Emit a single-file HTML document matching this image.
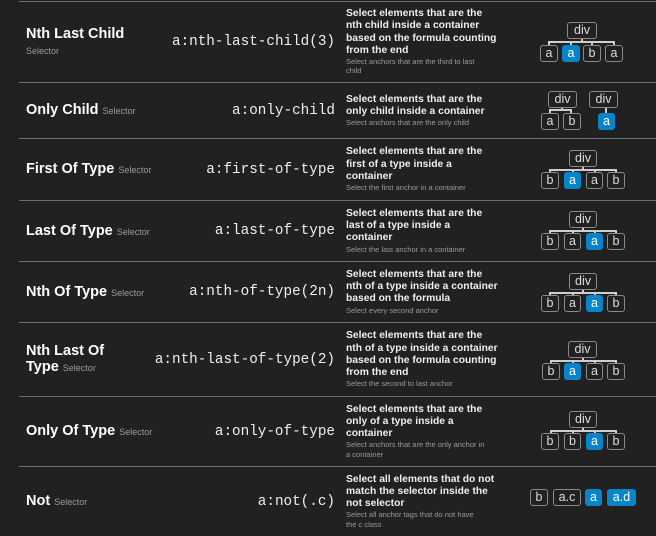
<!DOCTYPE html>
<html><head><meta charset="utf-8"><style>
*{margin:0;padding:0;box-sizing:border-box}
body{width:656px;height:536px;background:#212121;position:relative;overflow:hidden;font-family:"Liberation Sans",sans-serif;color:#fff}
.sep{position:absolute;left:19px;right:0;height:1px;background:#6e6e6e}
.row{position:absolute;left:0;width:656px}
.t{position:absolute;left:26px;top:0;bottom:0;display:flex;align-items:center;font-weight:bold;font-size:14.5px;line-height:16px;width:145px}
.t small{font-size:9px;color:#9a9a9a;font-weight:normal}
.c{position:absolute;right:321px;top:0;bottom:0;display:flex;align-items:center;font-family:"Liberation Mono",monospace;font-size:14.3px;color:#eee;white-space:nowrap}
.d{position:absolute;left:346px;top:0;bottom:0;display:flex;align-items:center;white-space:nowrap}
.d div{font-size:10.3px;line-height:12.2px;font-weight:bold;color:#eee}
.d p{font-size:7.5px;line-height:9.5px;color:#9a9a9a}
.bx{position:absolute;height:17px;border:1px solid #8a8a8a;border-radius:3px;font-size:12.5px;line-height:14px;text-align:center;color:#ddd;background:#212121}
.bl{background:#0a84c8;border-color:#0a84c8;color:#fff}
.ln{position:absolute;background:#cfcfcf}
</style></head><body>
<div class="sep" style="top:1px"></div>
<div class="sep" style="top:82px"></div>
<div class="sep" style="top:138px"></div>
<div class="sep" style="top:200px"></div>
<div class="sep" style="top:261px"></div>
<div class="sep" style="top:322px"></div>
<div class="sep" style="top:396px"></div>
<div class="sep" style="top:466px"></div>

<div class="row" style="top:2px;height:80px">
<div class="t"><span>Nth Last Child<br><small>Selector</small></span></div>
<div class="c">a:nth-last-child(3)</div>
<div class="d"><span><div>Select elements that are the<br>nth child inside a container<br>based on the formula counting<br>from the end</div><p>Select anchors that are the third to last<br>child</p></span></div>
</div>
<div class="row" style="top:83px;height:55px">
<div class="t"><span>Only Child <small>Selector</small></span></div>
<div class="c">a:only-child</div>
<div class="d"><span><div>Select elements that are the<br>only child inside a container</div><p>Select anchors that are the only child</p></span></div>
</div>
<div class="row" style="top:139px;height:61px">
<div class="t"><span>First Of Type <small>Selector</small></span></div>
<div class="c">a:first-of-type</div>
<div class="d"><span><div>Select elements that are the<br>first of a type inside a<br>container</div><p>Select the first anchor in a container</p></span></div>
</div>
<div class="row" style="top:201px;height:60px">
<div class="t"><span>Last Of Type <small>Selector</small></span></div>
<div class="c">a:last-of-type</div>
<div class="d"><span><div>Select elements that are the<br>last of a type inside a<br>container</div><p>Select the last anchor in a container</p></span></div>
</div>
<div class="row" style="top:262px;height:60px">
<div class="t"><span>Nth Of Type <small>Selector</small></span></div>
<div class="c">a:nth-of-type(2n)</div>
<div class="d"><span><div>Select elements that are the<br>nth of a type inside a container<br>based on the formula</div><p>Select every second anchor</p></span></div>
</div>
<div class="row" style="top:323px;height:73px">
<div class="t"><span>Nth Last Of<br>Type <small>Selector</small></span></div>
<div class="c">a:nth-last-of-type(2)</div>
<div class="d"><span><div>Select elements that are the<br>nth of a type inside a container<br>based on the formula counting<br>from the end</div><p>Select the second to last anchor</p></span></div>
</div>
<div class="row" style="top:397px;height:69px">
<div class="t"><span>Only Of Type <small>Selector</small></span></div>
<div class="c">a:only-of-type</div>
<div class="d"><span><div>Select elements that are the<br>only of a type inside a<br>container</div><p>Select anchors that are the only anchor in<br>a container</p></span></div>
</div>
<div class="row" style="top:467px;height:69px">
<div class="t"><span>Not <small>Selector</small></span></div>
<div class="c">a:not(.c)</div>
<div class="d"><span><div>Select all elements that do not<br>match the selector inside the<br>not selector</div><p>Select all anchor tags that do not have<br>the c class</p></span></div>
</div>

<!-- tree 1 -->
<div class="ln" style="left:549px;top:41px;width:66px;height:2px"></div>
<div class="ln" style="left:581px;top:38px;width:2px;height:4px"></div>
<div class="ln" style="left:548px;top:41px;width:2px;height:5px"></div>
<div class="ln" style="left:570px;top:41px;width:2px;height:5px"></div>
<div class="ln" style="left:591px;top:41px;width:2px;height:5px"></div>
<div class="ln" style="left:613px;top:41px;width:2px;height:5px"></div>
<div class="bx" style="left:567px;top:22px;width:30px">div</div>
<div class="bx" style="left:540px;top:45px;width:18px">a</div>
<div class="bx bl" style="left:562px;top:45px;width:18px">a</div>
<div class="bx" style="left:583px;top:45px;width:18px">b</div>
<div class="bx" style="left:605px;top:45px;width:18px">a</div>

<!-- tree 2 -->
<div class="ln" style="left:549px;top:109px;width:23px;height:2px"></div>
<div class="ln" style="left:561px;top:107px;width:2px;height:3px"></div>
<div class="ln" style="left:549px;top:109px;width:2px;height:5px"></div>
<div class="ln" style="left:570px;top:109px;width:2px;height:5px"></div>
<div class="ln" style="left:605px;top:107px;width:2px;height:7px"></div>
<div class="bx" style="left:548px;top:91px;width:29px">div</div>
<div class="bx" style="left:589px;top:91px;width:29px">div</div>
<div class="bx" style="left:541px;top:113px;width:18px">a</div>
<div class="bx" style="left:563px;top:113px;width:18px">b</div>
<div class="bx bl" style="left:598px;top:113px;width:17px">a</div>

<!-- tree 3 -->
<div style="position:absolute;left:0;top:150px">
<div class="ln" style="left:549px;top:19px;width:67px;height:2px"></div>
<div class="ln" style="left:582px;top:15px;width:2px;height:5px"></div>
<div class="ln" style="left:549px;top:19px;width:2px;height:4px"></div>
<div class="ln" style="left:572px;top:19px;width:2px;height:4px"></div>
<div class="ln" style="left:594px;top:19px;width:2px;height:4px"></div>
<div class="ln" style="left:615px;top:19px;width:2px;height:4px"></div>
<div class="bx" style="left:569px;top:0;width:28px">div</div>
<div class="bx" style="left:541px;top:22px;width:18px">b</div>
<div class="bx bl" style="left:564px;top:22px;width:17px">a</div>
<div class="bx" style="left:586px;top:22px;width:17px">a</div>
<div class="bx" style="left:607px;top:22px;width:18px">b</div>
</div>

<!-- tree 4 -->
<div style="position:absolute;left:0;top:211px">
<div class="ln" style="left:549px;top:19px;width:67px;height:2px"></div>
<div class="ln" style="left:582px;top:15px;width:2px;height:5px"></div>
<div class="ln" style="left:549px;top:19px;width:2px;height:4px"></div>
<div class="ln" style="left:572px;top:19px;width:2px;height:4px"></div>
<div class="ln" style="left:594px;top:19px;width:2px;height:4px"></div>
<div class="ln" style="left:615px;top:19px;width:2px;height:4px"></div>
<div class="bx" style="left:569px;top:0;width:28px">div</div>
<div class="bx" style="left:541px;top:22px;width:18px">b</div>
<div class="bx" style="left:564px;top:22px;width:17px">a</div>
<div class="bx bl" style="left:586px;top:22px;width:17px">a</div>
<div class="bx" style="left:607px;top:22px;width:18px">b</div>
</div>

<!-- tree 5 -->
<div style="position:absolute;left:0;top:273px">
<div class="ln" style="left:549px;top:19px;width:67px;height:2px"></div>
<div class="ln" style="left:582px;top:15px;width:2px;height:5px"></div>
<div class="ln" style="left:549px;top:19px;width:2px;height:4px"></div>
<div class="ln" style="left:572px;top:19px;width:2px;height:4px"></div>
<div class="ln" style="left:594px;top:19px;width:2px;height:4px"></div>
<div class="ln" style="left:615px;top:19px;width:2px;height:4px"></div>
<div class="bx" style="left:569px;top:0;width:28px">div</div>
<div class="bx" style="left:541px;top:22px;width:18px">b</div>
<div class="bx" style="left:564px;top:22px;width:17px">a</div>
<div class="bx bl" style="left:586px;top:22px;width:17px">a</div>
<div class="bx" style="left:607px;top:22px;width:18px">b</div>
</div>

<!-- tree 6 -->
<div style="position:absolute;left:0;top:341px">
<div class="ln" style="left:550px;top:19px;width:67px;height:2px"></div>
<div class="ln" style="left:582px;top:15px;width:2px;height:5px"></div>
<div class="ln" style="left:550px;top:19px;width:2px;height:4px"></div>
<div class="ln" style="left:572px;top:19px;width:2px;height:4px"></div>
<div class="ln" style="left:594px;top:19px;width:2px;height:4px"></div>
<div class="ln" style="left:615px;top:19px;width:2px;height:4px"></div>
<div class="bx" style="left:568px;top:0;width:29px">div</div>
<div class="bx" style="left:542px;top:22px;width:18px">b</div>
<div class="bx bl" style="left:564px;top:22px;width:17px">a</div>
<div class="bx" style="left:586px;top:22px;width:17px">a</div>
<div class="bx" style="left:607px;top:22px;width:18px">b</div>
</div>

<!-- tree 7 -->
<div style="position:absolute;left:0;top:411px">
<div class="ln" style="left:550px;top:19px;width:67px;height:2px"></div>
<div class="ln" style="left:582px;top:15px;width:2px;height:5px"></div>
<div class="ln" style="left:550px;top:19px;width:2px;height:4px"></div>
<div class="ln" style="left:572px;top:19px;width:2px;height:4px"></div>
<div class="ln" style="left:594px;top:19px;width:2px;height:4px"></div>
<div class="ln" style="left:615px;top:19px;width:2px;height:4px"></div>
<div class="bx" style="left:569px;top:0;width:28px">div</div>
<div class="bx" style="left:541px;top:22px;width:18px">b</div>
<div class="bx" style="left:564px;top:22px;width:17px">b</div>
<div class="bx bl" style="left:586px;top:22px;width:17px">a</div>
<div class="bx" style="left:607px;top:22px;width:18px">b</div>
</div>

<!-- not -->
<div class="bx" style="left:530px;top:489px;width:18px">b</div>
<div class="bx" style="left:553px;top:489px;width:28px">a.c</div>
<div class="bx bl" style="left:585px;top:489px;width:17px">a</div>
<div class="bx bl" style="left:607px;top:489px;width:29px">a.d</div>
</body></html>
